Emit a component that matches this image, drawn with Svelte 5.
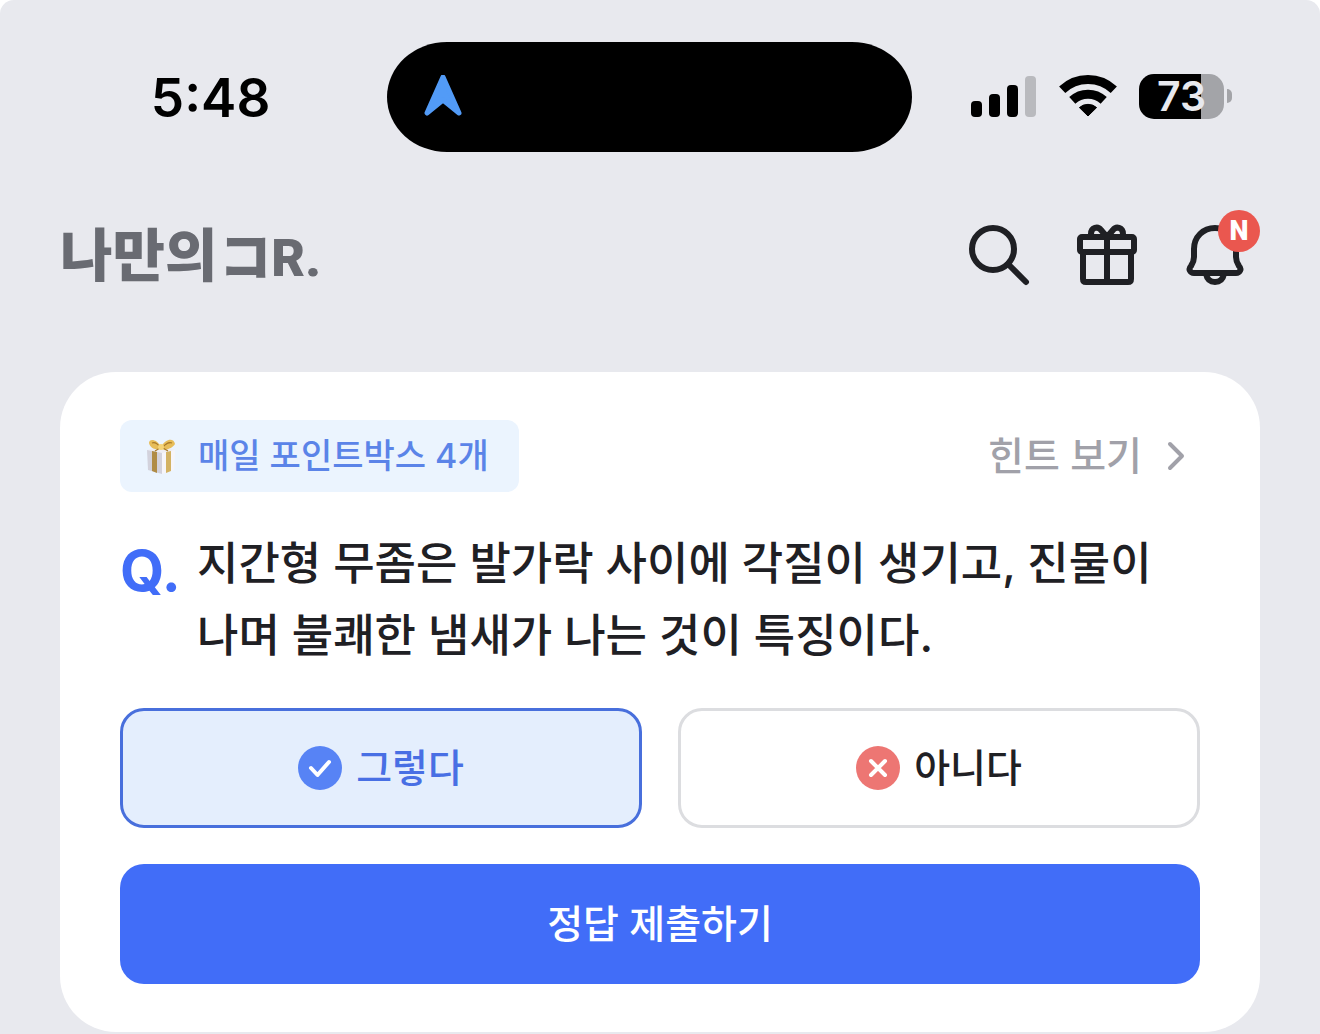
<script>
    let answer = $state('yes');

    const bars = [16, 23, 32, 41];
    const battery = 73;
</script>

<main>
    <div class="status">
        <span class="time">5:48</span>
        <div class="island">
            <svg width="40" height="44" viewBox="0 0 40 44">
                <path d="M20 2 L36 38 L20 25 L4 38 Z" fill="#529bf7" stroke="#529bf7" stroke-width="5" stroke-linejoin="round"/>
            </svg>
        </div>
        <div class="system">
            <div class="signal">
                {#each bars as height, i}
                    <span class:off={i === 3} style="height: {height}px"></span>
                {/each}
            </div>
            <svg class="wifi" width="58" height="42" viewBox="0 0 58 42">
                <g fill="none" stroke="#000" stroke-width="9">
                    <path d="M3.2 14.8 A37.5 37.5 0 0 1 54.8 14.8"/>
                    <path d="M13.3 25.4 A23 23 0 0 1 44.7 25.4"/>
                </g>
                <path d="M29 41 L20.4 32.6 A13 13 0 0 1 37.6 32.6 Z" stroke="#000" stroke-width="1" stroke-linejoin="round"/>
            </svg>
            <div class="battery">
                <div class="level" style="--level: {battery}%">{battery}</div>
                <span class="cap"></span>
            </div>
        </div>
    </div>

    <header>
        <h1>나만의<span>コR.</span></h1>
        <nav>
            <button aria-label="검색">
                <svg width="72" height="72" viewBox="0 0 72 72">
                    <circle cx="30" cy="30" r="21"/>
                    <path d="M45 45 L63 63"/>
                </svg>
            </button>
            <button aria-label="선물">
                <svg width="72" height="72" viewBox="0 0 72 72">
                    <rect x="9" y="18" width="54" height="15" rx="2"/>
                    <path d="M12 33 V60 Q12 63 15 63 H57 Q60 63 60 60 V33 M36 18 V63"/>
                    <path d="M20 17 V15 C20 8 27 7 30 11 L36 18 L42 11 C45 7 52 8 52 15 V17"/>
                </svg>
            </button>
            <button aria-label="알림">
                <svg width="72" height="72" viewBox="0 0 72 72">
                    <path d="M36 9 C24 9 15 18 15 30 V38 C15 42 14 44 12 47 C9 50 11 54 15 54 H57 C61 54 63 50 60 47 C58 44 57 42 57 38 V30 C57 18 48 9 36 9 Z"/>
                    <path d="M27 55 C28 60 31 63 36 63 C41 63 44 60 45 55"/>
                </svg>
                <span class="badge">N</span>
            </button>
        </nav>
    </header>

    <section class="card">
        <div class="top">
            <div class="chip">
                <svg width="36" height="36" viewBox="0 0 36 36">
                    <path d="M3 12 L16 9 L31 12 L18 16 Z" fill="#eeedf2"/>
                    <path d="M3 12 L18 15 V36 L4 32 Z" fill="#d3d2dc"/>
                    <path d="M18 15 L31 12 L30 32 L18 36 Z" fill="#f6f5fa"/>
                    <path d="M8 13 L13 14 V35 L8 33 Z" fill="#b08c46"/>
                    <path d="M22 14 L27 13 V33 L22 35 Z" fill="#d3b263"/>
                    <path d="M17 9 C12 0 5 1 5 5 C6 10 12 13 17 10 C20 14 29 10 31 6 C30 0 22 0 17 9 Z" fill="#e7bd59"/>
                    <path d="M16 9 C13 5 10 4 8 5 M18 10 C22 5 26 4 28 5 M16 10 L11 13 M19 10 L24 13" fill="none" stroke="#a87928" stroke-width="1.2"/>
                    <circle cx="17" cy="9" r="3" fill="#f5d477"/>
                </svg>
                <span>매일 포인트박스 4개</span>
            </div>
            <a class="hint" href="#hint">
                힌트 보기
                <svg width="48" height="48" viewBox="0 0 48 48">
                    <path d="M18 12 L30 24 L18 36" fill="none" stroke="#a1a1a9" stroke-width="4" stroke-linecap="round" stroke-linejoin="round"/>
                </svg>
            </a>
        </div>

        <div class="question">
            <span class="q">Q.</span>
            <p>지간형 무좀은 발가락 사이에 각질이 생기고, 진물이 나며 불쾌한 냄새가 나는 것이 특징이다.</p>
        </div>

        <div class="options">
            <button class:selected={answer === 'yes'} aria-pressed={answer === 'yes'} onclick={() => (answer = 'yes')}>
                <svg width="44" height="44" viewBox="0 0 44 44">
                    <circle cx="22" cy="22" r="22" fill="#5783f5"/>
                    <path d="M13 22 L19.5 29 L31 16" fill="none" stroke="#fff" stroke-width="4" stroke-linecap="round" stroke-linejoin="round"/>
                </svg>
                그렇다
            </button>
            <button class:selected={answer === 'no'} aria-pressed={answer === 'no'} onclick={() => (answer = 'no')}>
                <svg width="44" height="44" viewBox="0 0 44 44">
                    <circle cx="22" cy="22" r="22" fill="#ed7673"/>
                    <path d="M15 15 L29 29 M29 15 L15 29" fill="none" stroke="#fff" stroke-width="4" stroke-linecap="round"/>
                </svg>
                아니다
            </button>
        </div>

        <button class="submit">정답 제출하기</button>
    </section>
</main>

<style>
    :global(body) {
        margin: 0;
        background: #fff;
    }
    main {
        box-sizing: border-box;
        min-height: 100vh;
        padding-top: 42px;
        border-radius: 14px 14px 0 0;
        background: #e8e9ee;
        color: #1f2024;
        font-family: Inter, "Noto Sans CJK KR", sans-serif;
        font-weight: 500;
    }
    svg {
        display: block;
        flex: none;
    }
    button {
        border: 0;
        padding: 0;
        background: none;
        color: inherit;
        font: inherit;
        cursor: pointer;
    }
    .status {
        display: grid;
        grid-template-columns: 31fr 42fr 31fr;
        align-items: center;
        padding-right: 21px;
        color: #000;
    }
    .time {
        padding: 2px 0 0 34px;
        text-align: center;
        font-size: 53px;
        font-weight: 600;
        line-height: 64px;
    }
    .island {
        display: flex;
        align-items: center;
        box-sizing: border-box;
        height: 110px;
        padding-left: 36px;
        border-radius: 60px / 55px;
        background: #000;
    }
    .system {
        display: flex;
        align-items: center;
        justify-content: flex-end;
        padding: 0 67px 2px 0;
    }
    .signal {
        display: flex;
        align-items: flex-end;
        gap: 7px;
    }
    .signal span {
        width: 11px;
        border-radius: 4px;
        background: #000;
    }
    .signal .off {
        background: #b9babe;
    }
    .wifi {
        margin: 0 22px 0 23px;
    }
    .battery {
        display: flex;
        align-items: center;
        gap: 3px;
    }
    .level {
        width: 85px;
        border-radius: 15px;
        background: linear-gradient(to right, #000 var(--level), #a3a4a8 var(--level));
        color: #e8e9ee;
        text-align: center;
        font-size: 41px;
        font-weight: 600;
        line-height: 45px;
    }
    .cap {
        width: 5px;
        height: 14px;
        border-radius: 0 5px 5px 0;
        background: #a3a4a8;
    }
    header {
        display: flex;
        align-items: center;
        justify-content: space-between;
        padding: 67px 69px 81px 60px;
    }
    h1 {
        margin: 4px 0 0;
        color: #696b72;
        font-family: Roboto, "Noto Sans CJK KR", sans-serif;
        font-size: 57px;
        font-weight: 900;
        line-height: 68px;
    }
    h1 span {
        margin-left: 2px;
        font-size: 52px;
        line-height: 1;
    }
    nav {
        display: flex;
        gap: 36px;
    }
    nav button {
        position: relative;
    }
    nav svg {
        fill: none;
        stroke: #1f2024;
        stroke-width: 6;
        stroke-linecap: round;
        stroke-linejoin: round;
    }
    .badge {
        position: absolute;
        top: -9px;
        right: -9px;
        width: 42px;
        border-radius: 50%;
        background: #ea574f;
        color: #fff;
        font-family: Roboto, sans-serif;
        font-size: 27px;
        font-weight: 900;
        line-height: 42px;
    }
    .card {
        display: flex;
        flex-direction: column;
        gap: 36px;
        margin: 0 60px;
        padding: 48px 60px;
        border-radius: 56px;
        background: #fff;
    }
    .top {
        display: flex;
        align-items: center;
        justify-content: space-between;
    }
    .chip {
        display: flex;
        align-items: center;
        gap: 18px;
        padding: 0 30px 0 24px;
        border-radius: 12px;
        background: #ebf4fe;
        color: #5b84e8;
        font-size: 34px;
        line-height: 72px;
    }
    .hint {
        display: flex;
        align-items: center;
        gap: 10px;
        color: #a1a1a9;
        font-size: 39px;
        line-height: 48px;
        text-decoration: none;
    }
    .question {
        display: flex;
        align-items: flex-start;
    }
    .q {
        flex: none;
        width: 77px;
        height: 72px;
        color: #416df8;
        font-size: 57px;
        font-weight: 700;
        line-height: 86px;
    }
    p {
        margin: 0;
        font-size: 45px;
        line-height: 72px;
        word-break: keep-all;
    }
    .options {
        display: grid;
        grid-template-columns: 1fr 1fr;
        gap: 36px;
    }
    .options button {
        display: flex;
        align-items: center;
        justify-content: center;
        gap: 14px;
        box-sizing: border-box;
        height: 120px;
        border: 3px solid #dcdde0;
        border-radius: 24px;
        background: #fff;
        font-size: 39px;
        line-height: 48px;
    }
    .options .selected {
        border-color: #486fdc;
        background: #e4eefd;
        color: #486fe4;
    }
    .submit {
        height: 120px;
        border-radius: 24px;
        background: #416df8;
        color: #fff;
        font-size: 39px;
        line-height: 48px;
    }
</style>
